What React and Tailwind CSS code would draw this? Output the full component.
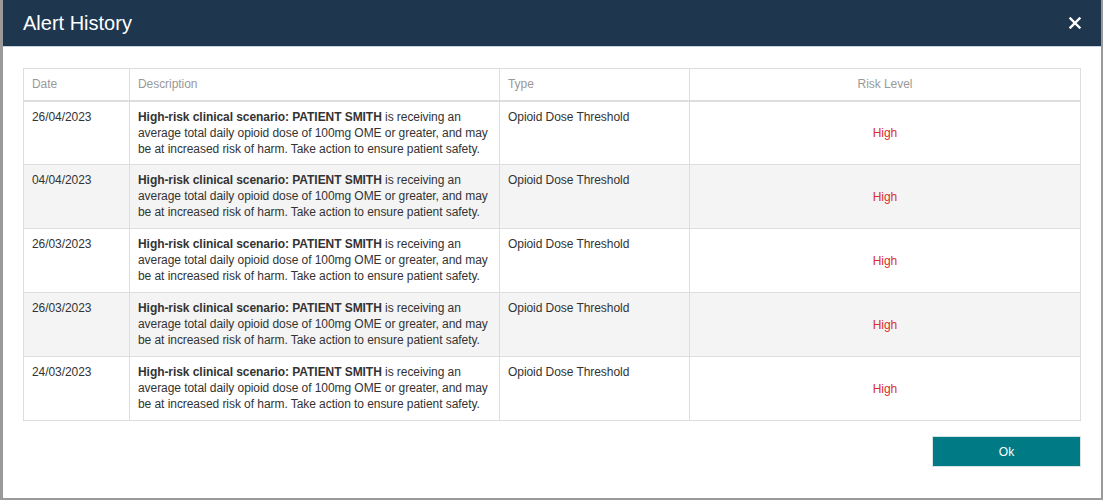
import React from 'react';

const alerts = [
  { date: '26/04/2023' },
  { date: '04/04/2023' },
  { date: '26/03/2023' },
  { date: '26/03/2023' },
  { date: '24/03/2023' },
];

const App = () => {
  return (
    <div className="h-[500px] w-[1103px] overflow-hidden bg-[#9a9a9a] pl-[3px] pr-[2px] pb-[2px] font-['Liberation_Sans',Arial,sans-serif]">
      <div className="flex h-full flex-col bg-white">
        {/* Header */}
        <div className="flex h-[47px] shrink-0 items-center justify-between border-b border-[#c7d3de] bg-[#1e374f] pl-5 pr-[20px]">
          <h1 className="text-[20px] text-white">Alert History</h1>
          <button className="text-white">
            <svg width="12" height="12" viewBox="0 0 12 12" fill="none" stroke="currentColor" strokeWidth="2.4" strokeLinecap="square">
              <path d="M1.5 1.5l9 9M10.5 1.5l-9 9" />
            </svg>
          </button>
        </div>

        {/* Body */}
        <div className="px-5 pt-[21px]">
          <table className="w-full table-fixed border-collapse border border-[#dddddd] text-[12px] leading-4 tracking-[-0.06px] text-[#333333]">
            <thead>
              <tr className="h-[32px] border-b-2 border-[#dddddd] text-[#999999]">
                <th className="w-[106px] border-r border-[#dddddd] px-2 text-left font-normal">Date</th>
                <th className="w-[370px] border-r border-[#dddddd] px-2 text-left font-normal">Description</th>
                <th className="w-[190px] border-r border-[#dddddd] px-2 text-left font-normal">Type</th>
                <th className="px-2 text-center font-normal">Risk Level</th>
              </tr>
            </thead>
            <tbody>
              {alerts.map((a, i) => (
                <tr key={i} className={`h-[64px] border-b border-[#dddddd] ${i % 2 === 1 ? 'bg-[#f4f4f4]' : 'bg-white'}`}>
                  <td className="border-r border-[#dddddd] px-2 pt-[7px] align-top">{a.date}</td>
                  <td className="border-r border-[#dddddd] pl-2 pr-1 pt-[7px] align-top">
                    <span className="font-bold">High-risk clinical scenario: PATIENT SMITH</span> is receiving an average total daily opioid dose of 100mg OME or greater, and may be at increased risk of harm. Take action to ensure patient safety.
                  </td>
                  <td className="border-r border-[#dddddd] px-2 pt-[7px] align-top">Opioid Dose Threshold</td>
                  <td className="px-2 text-center align-middle text-[#d9302c]">High</td>
                </tr>
              ))}
            </tbody>
          </table>

          <div className="mt-[15px] flex justify-end">
            <button className="h-[31px] w-[149px] border border-[#d6e4e6] bg-[#007b85] text-[12px] text-white">Ok</button>
          </div>
        </div>
      </div>
    </div>
  );
};

export default App;
